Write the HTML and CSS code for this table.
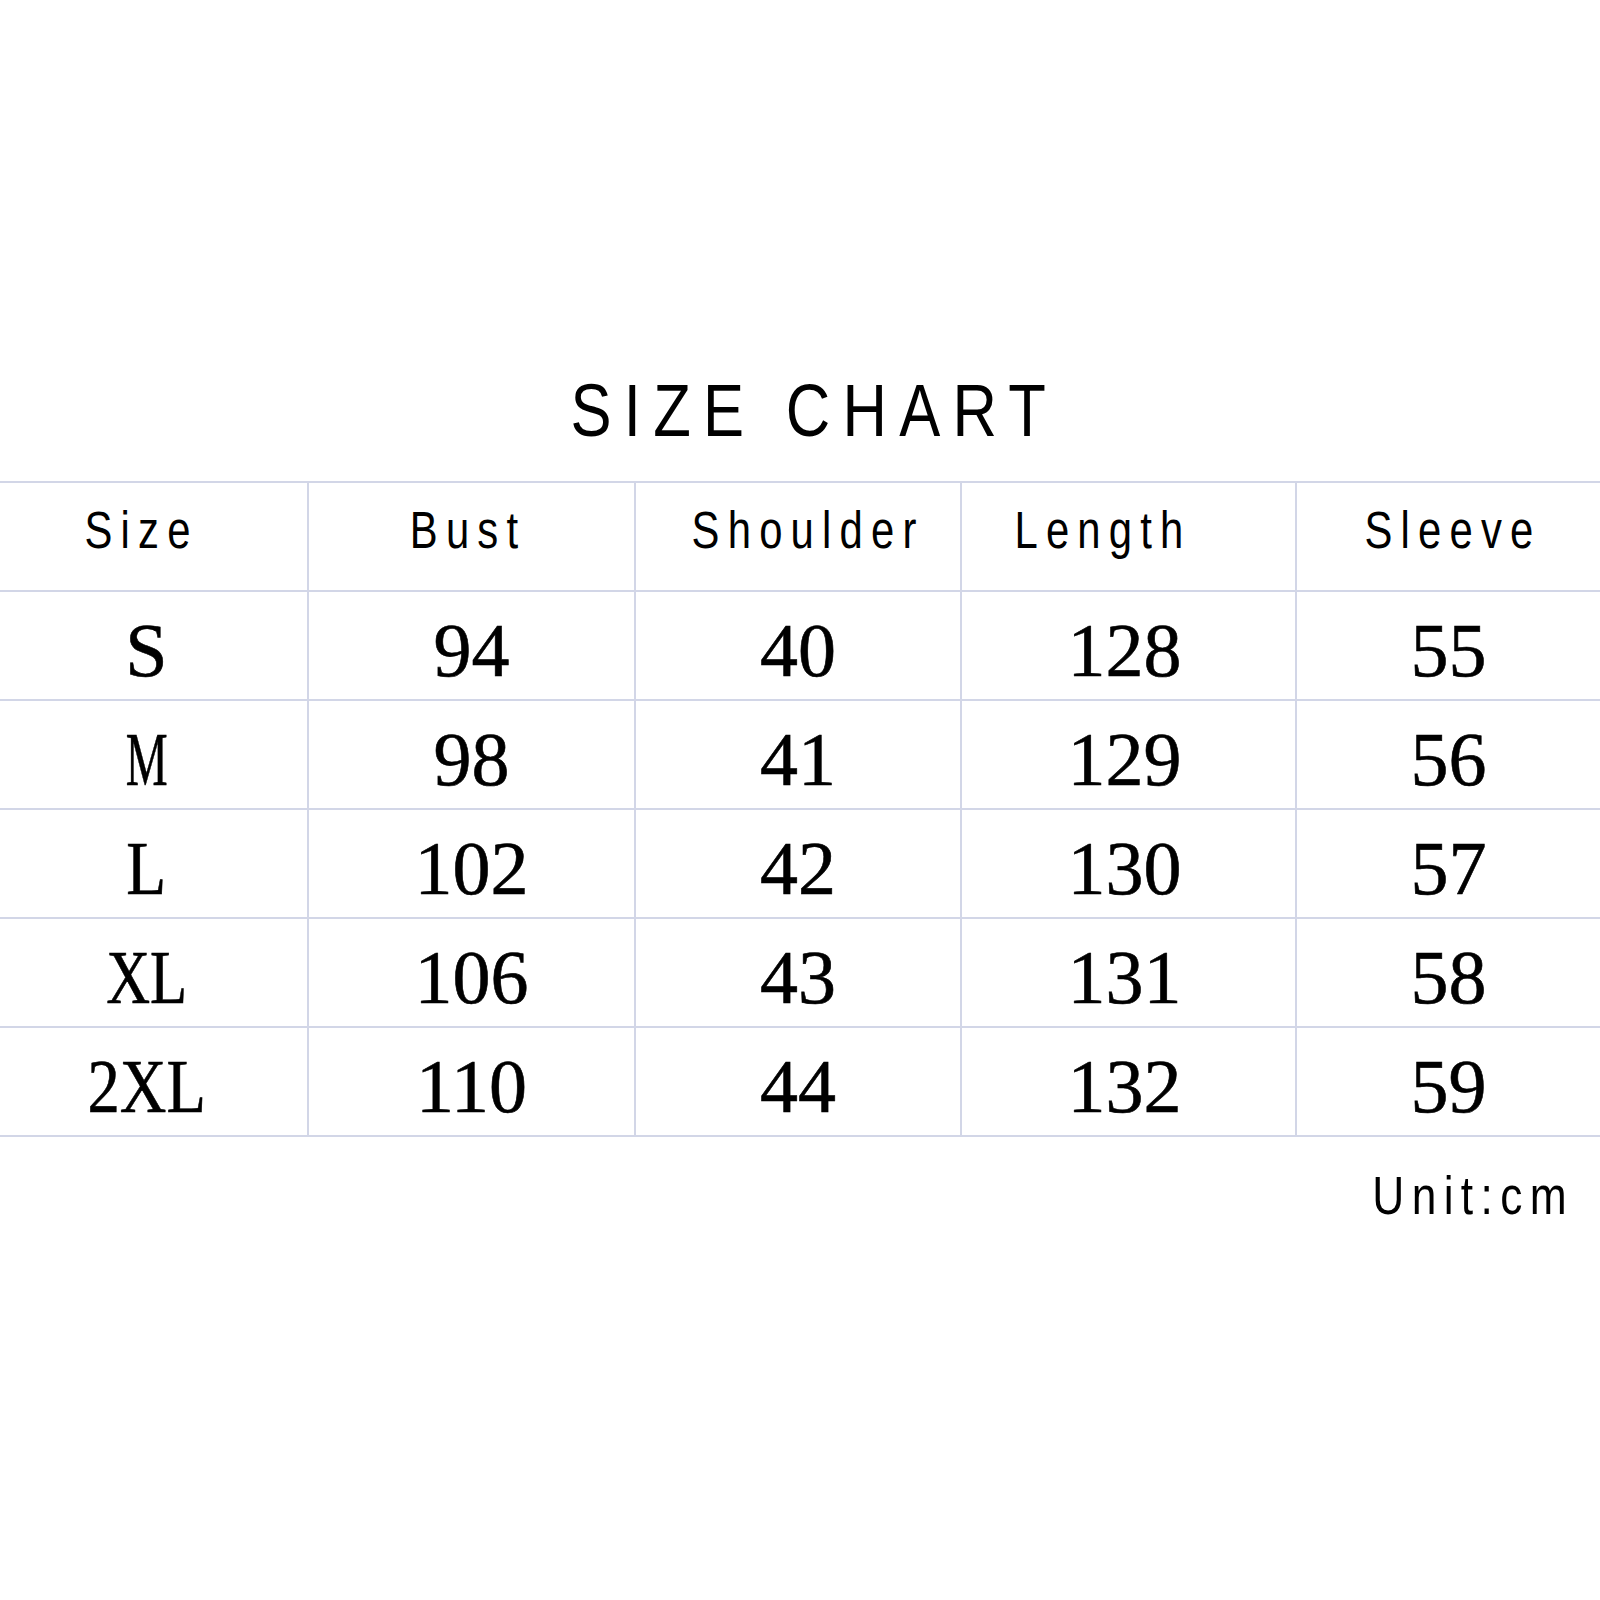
FILE: index.html
```html
<!DOCTYPE html>
<html lang="en">
<head>
<meta charset="utf-8">
<title>Size Chart</title>
<link rel="stylesheet" href="styles.css">
</head>
<body>
<main class="page">
  <h1 class="title"><span class="title-text">SIZE CHART</span></h1>
  <div class="chart">
    <div class="row head">
      <div class="cell"><span class="h h-size">Size</span></div>
      <div class="cell"><span class="h h-bust">Bust</span></div>
      <div class="cell"><span class="h h-shoulder">Shoulder</span></div>
      <div class="cell"><span class="h h-length">Length</span></div>
      <div class="cell"><span class="h h-sleeve">Sleeve</span></div>
    </div>
    <div class="row data">
      <div class="cell first"><span class="sz">S</span></div><div class="cell">94</div><div class="cell">40</div><div class="cell c4">128</div><div class="cell">55</div>
    </div>
    <div class="row data">
      <div class="cell first"><span class="sz sz-m">M</span></div><div class="cell">98</div><div class="cell">41</div><div class="cell c4">129</div><div class="cell">56</div>
    </div>
    <div class="row data">
      <div class="cell first"><span class="sz sz-l">L</span></div><div class="cell">102</div><div class="cell">42</div><div class="cell c4">130</div><div class="cell">57</div>
    </div>
    <div class="row data">
      <div class="cell first"><span class="sz sz-xl">XL</span></div><div class="cell">106</div><div class="cell">43</div><div class="cell c4">131</div><div class="cell">58</div>
    </div>
    <div class="row data last">
      <div class="cell first"><span class="sz sz-2xl">2XL</span></div><div class="cell">110</div><div class="cell">44</div><div class="cell c4">132</div><div class="cell">59</div>
    </div>
  </div>
  <p class="unit"><span class="unit-text">Unit:cm</span></p>
</main>
</body>
</html>
```

FILE: styles.css
```css
html, body {
  margin: 0;
  padding: 0;
  background: #ffffff;
}

.page {
  width: 1600px;
  height: 1600px;
  padding-top: 373px;
  box-sizing: border-box;
  color: #000;
}

.title {
  margin: 0 0 33px 0;
  padding-left: 29px;
  font-family: "Liberation Sans", Arial, sans-serif;
  font-weight: normal;
  font-size: 75px;
  line-height: 75px;
  text-align: center;
}

.title-text {
  display: inline-block;
  letter-spacing: 15px;
  transform: scaleX(0.82);
}

.chart {
  width: 1600px;
}

.row {
  display: grid;
  grid-template-columns: 307px 327px 326px 335px 305px;
  height: 109px;
  border-top: 2px solid #d2d6e7;
  box-sizing: border-box;
}

.row.last {
  height: 111px;
  border-bottom: 2px solid #d2d6e7;
}

.cell {
  display: flex;
  align-items: center;
  justify-content: center;
  border-left: 2px solid #d2d6e7;
}

.cell:first-child {
  border-left: none;
}

.head .cell {
  padding-bottom: 12px;
}

.h {
  display: inline-block;
  font-family: "Liberation Sans", Arial, sans-serif;
  font-size: 51px;
  line-height: 51px;
  letter-spacing: 10px;
  transform: scaleX(0.82);
}

.h-size { margin-right: 23px; }
.h-bust { margin-right: 7px; }
.h-shoulder { margin-left: 20px; }
.h-length { margin-right: 51px; }
.h-sleeve { margin-left: 9px; }

.data .cell {
  padding-top: 9px;
  font-family: "Liberation Serif", "Times New Roman", serif;
  font-size: 76px;
  line-height: 76px;
  -webkit-text-stroke: 0.6px #000;
}

.data .cell.first {
  padding-right: 14px;
}

.data .cell.c4 {
  padding-right: 8px;
}

.sz {
  display: inline-block;
}

.sz-m { transform: scaleX(0.62); }
.sz-l { transform: scaleX(0.86); }
.sz-xl { transform: scaleX(0.8); }
.sz-2xl { transform: scaleX(0.85); }

.unit {
  margin: 31px 0 0 0;
  padding-right: 26px;
  text-align: right;
  font-family: "Liberation Sans", Arial, sans-serif;
  font-size: 54px;
  line-height: 54px;
}

.unit-text {
  display: inline-block;
  letter-spacing: 9px;
  transform: scaleX(0.82);
  transform-origin: right center;
}
```
